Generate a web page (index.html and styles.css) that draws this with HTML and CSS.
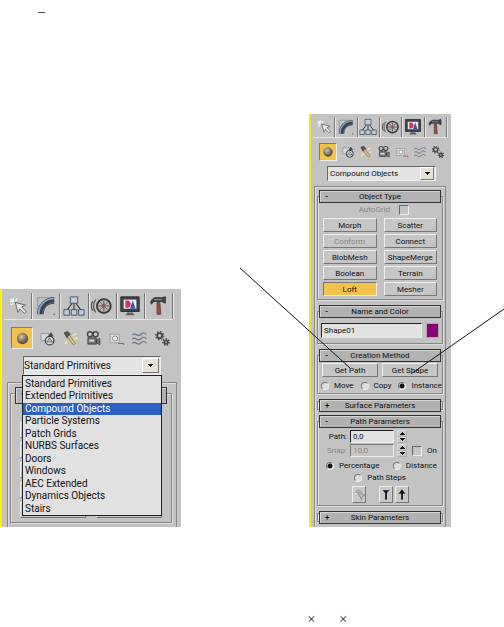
FILE: index.html
```html
<!DOCTYPE html>
<html lang="en">
<head>
<meta charset="utf-8">
<meta name="viewport" content="width=device-width, initial-scale=1">
<title>Compound Objects</title>
<link rel="stylesheet" href="styles.css">
</head>
<body>
<svg class="defs" aria-hidden="true">
  <defs>
    <radialGradient id="ball" cx=".4" cy=".35" r=".65"><stop offset="0" stop-color="#ccc"/><stop offset=".5" stop-color="#777"/><stop offset="1" stop-color="#333"/></radialGradient>
    <symbol id="create" viewBox="0 0 24 24"><path d="M7 3v4M3 7h4M4 4l3 3M11 4l-2 3M4 11l3-2" stroke="#fff" stroke-width="1.4"/><path d="M9 8l3 11 2-4 5 5 2-2-5-5 4-2z" fill="#eee" stroke="#555"/></symbol>
    <symbol id="modify" viewBox="0 0 24 24"><path d="M3 21V3h18" fill="none" stroke="#888"/><path d="M6 21C6 12 12 6 21 6" fill="none" stroke="#2a3442" stroke-width="7"/><path d="M4 21C4 11 11 4 21 4" fill="none" stroke="#7b9ccb" stroke-width="2"/><path d="M8 21C9 13 13 9 21 8" fill="none" stroke="#52688a"/><path d="M20 21h2" stroke="#444"/></symbol>
    <symbol id="hierarchy" viewBox="0 0 24 24"><path d="M12 8v9M10 9l-6 8M14 9l6 8" stroke="#333" stroke-width="1.3"/><g fill="#c3cddd" stroke="#394454"><path d="M8 2h8v7H8zM1 16h6v6H1zM9 16h6v6H9zM17 16h6v6h-6z"/></g></symbol>
    <symbol id="motion" viewBox="0 0 24 24"><circle cx="14" cy="12" r="7.5" fill="#bbb" stroke="#292929" stroke-width="2"/><path d="M14 6v12M8 12h12M10 8l8 8M18 8l-8 8" stroke="#444"/><circle cx="14" cy="12" r="2" fill="#a44"/><path d="M5 5c-3 4-3 10 0 14M2 7c-2 3-2 7 0 10" fill="none" stroke="#444" stroke-width="1.3"/></symbol>
    <symbol id="display" viewBox="0 0 24 24"><path d="M2 2h20v16H2z" fill="#30343d" stroke="#16191e"/><path d="M5 5h14v10H5z" fill="#eef"/><path d="M7 6v8h2c5 0 5-8 0-8z" fill="#d12d45"/><path d="M12 15l3-9 3 9z" fill="#274abd"/><path d="M9 19h6l2 3H7z" fill="#555"/></symbol>
    <symbol id="utility" viewBox="0 0 24 24"><path d="M11 8h3l1 13h-4z" fill="#984237" stroke="#5e302c"/><path d="M4 8c1-4 5-6 9-5h3l4-1v7l-4-2H9c-2 0-3 1-4 3z" fill="#333a41" stroke="#222"/><path d="M8 5h8" stroke="#8d98a4"/></symbol>
    <symbol id="sphere" viewBox="0 0 24 24"><circle cx="12" cy="12" r="8" fill="url(#ball)"/></symbol>
    <symbol id="shapes" viewBox="0 0 24 24"><path d="M3 5h11v10H3z" fill="#ddd" stroke="#777"/><path d="M13 8l4-5 4 6z" fill="#333"/><circle cx="15" cy="15" r="6" fill="#e8e8e8" stroke="#222" stroke-width="1.7"/><path d="M11 17l4-6 4 6z" fill="#bbb" stroke="#333"/></symbol>
    <symbol id="light" viewBox="0 0 24 24"><path d="M3 4l5-2 4 4-5 5z" fill="#444" stroke="#222"/><path d="M8 10l2-3 9 12-3 2z" fill="#e8cc67" stroke="#665b38"/><path d="M15 8l5-3M17 12h5M7 15l-3 5" stroke="#fff2a2" stroke-width="2"/></symbol>
    <symbol id="camera" viewBox="0 0 24 24"><circle cx="7" cy="6" r="3.5" fill="#ccc" stroke="#333" stroke-width="2"/><circle cx="15" cy="6" r="3.5" fill="#ccc" stroke="#333" stroke-width="2"/><path d="M4 11h12v9H4zM16 14l5-2v9l-5-3z" fill="#666" stroke="#222"/><path d="M6 15h7" stroke="#ddd" stroke-width="3"/></symbol>
    <symbol id="helper" viewBox="0 0 24 24"><path d="M3 6h13v12H3z" fill="#ddd" stroke="#888"/><circle cx="10" cy="12" r="3.5" fill="#fff" stroke="#555"/><path d="M14 19h8v2" fill="none" stroke="#a44e4e" stroke-width="1.5"/></symbol>
    <symbol id="waves" viewBox="0 0 24 24"><path d="M2 7c4-5 7 4 11 0s5-3 9-1M2 13c4-5 7 4 11 0s5-3 9-1M2 19c4-5 7 4 11 0s5-3 9-1" fill="none" stroke="#596a83" stroke-width="1.7"/></symbol>
    <symbol id="gears" viewBox="0 0 24 24"><g fill="none" stroke="#333"><circle cx="8" cy="8" r="3.5" stroke-width="2.5"/><circle cx="8" cy="8" r="5.5" stroke-width="2" stroke-dasharray="2 2.3"/><circle cx="17" cy="17" r="2.5" stroke-width="2.5"/><circle cx="17" cy="17" r="4.5" stroke-width="2" stroke-dasharray="2 2"/></g></symbol>
  </defs>
</svg>

<p class="note note-top">–</p>

<main class="figures">
  <section class="panel panel-large" aria-label="Geometry categories">
    <nav class="tabs">
      <button aria-label="Create"><svg><use href="#create"/></svg></button>
      <button aria-label="Modify"><svg><use href="#modify"/></svg></button>
      <button aria-label="Hierarchy"><svg><use href="#hierarchy"/></svg></button>
      <button aria-label="Motion"><svg><use href="#motion"/></svg></button>
      <button aria-label="Display"><svg><use href="#display"/></svg></button>
      <button aria-label="Utilities"><svg><use href="#utility"/></svg></button>
    </nav>
    <div class="tools">
      <button class="active" aria-label="Geometry"><svg><use href="#sphere"/></svg></button>
      <button aria-label="Shapes"><svg><use href="#shapes"/></svg></button>
      <button aria-label="Lights"><svg><use href="#light"/></svg></button>
      <button aria-label="Cameras"><svg><use href="#camera"/></svg></button>
      <button aria-label="Helpers"><svg><use href="#helper"/></svg></button>
      <button aria-label="Space Warps"><svg><use href="#waves"/></svg></button>
      <button aria-label="Systems"><svg><use href="#gears"/></svg></button>
    </div>
    <div class="picker">
      <select aria-label="Category"><option>Standard Primitives</option></select>
      <ul class="menu" role="listbox" aria-label="Categories">
        <li role="option">Standard Primitives</li>
        <li role="option">Extended Primitives</li>
        <li role="option" class="chosen" aria-selected="true">Compound Objects</li>
        <li role="option">Particle Systems</li>
        <li role="option">Patch Grids</li>
        <li role="option">NURBS Surfaces</li>
        <li role="option">Doors</li>
        <li role="option">Windows</li>
        <li role="option">AEC Extended</li>
        <li role="option">Dynamics Objects</li>
        <li role="option">Stairs</li>
      </ul>
    </div>
    <div class="rollouts">
      <section class="rollout">
        <h2><span>-</span></h2>
        <div class="slots"><i></i><i></i><i></i><i></i><i></i><i></i><i></i><i></i><i></i><i></i></div>
      </section>
    </div>
  </section>

  <section class="panel panel-small" aria-label="Loft settings">
    <nav class="tabs">
      <button aria-label="Create"><svg><use href="#create"/></svg></button>
      <button aria-label="Modify"><svg><use href="#modify"/></svg></button>
      <button aria-label="Hierarchy"><svg><use href="#hierarchy"/></svg></button>
      <button aria-label="Motion"><svg><use href="#motion"/></svg></button>
      <button aria-label="Display"><svg><use href="#display"/></svg></button>
      <button aria-label="Utilities"><svg><use href="#utility"/></svg></button>
    </nav>
    <div class="tools">
      <button class="active" aria-label="Geometry"><svg><use href="#sphere"/></svg></button>
      <button aria-label="Shapes"><svg><use href="#shapes"/></svg></button>
      <button aria-label="Lights"><svg><use href="#light"/></svg></button>
      <button aria-label="Cameras"><svg><use href="#camera"/></svg></button>
      <button aria-label="Helpers"><svg><use href="#helper"/></svg></button>
      <button aria-label="Space Warps"><svg><use href="#waves"/></svg></button>
      <button aria-label="Systems"><svg><use href="#gears"/></svg></button>
    </div>
    <div class="picker">
      <select aria-label="Category"><option>Compound Objects</option></select>
    </div>
    <div class="rollouts">
      <section class="rollout">
        <h2><span>-</span>Object Type</h2>
        <label class="autogrid">AutoGrid <input type="checkbox" disabled></label>
        <div class="types">
          <button>Morph</button><button>Scatter</button>
          <button disabled>Conform</button><button>Connect</button>
          <button>BlobMesh</button><button>ShapeMerge</button>
          <button>Boolean</button><button>Terrain</button>
          <button class="active">Loft</button><button>Mesher</button>
        </div>
      </section>
      <section class="rollout">
        <h2><span>-</span>Name and Color</h2>
        <div class="name">
          <input type="text" aria-label="Name" value="Shape01">
          <button class="swatch" aria-label="Color"></button>
        </div>
      </section>
      <section class="rollout">
        <h2><span>-</span>Creation Method</h2>
        <div class="get"><button>Get Path</button><button>Get Shape</button></div>
        <div class="radios">
          <label><input type="radio" name="method">Move</label>
          <label><input type="radio" name="method">Copy</label>
          <label><input type="radio" name="method" checked>Instance</label>
        </div>
      </section>
      <section class="rollout closed"><h2><span>+</span>Surface Parameters</h2></section>
      <section class="rollout">
        <h2><span>-</span>Path Parameters</h2>
        <div class="params">
          <label for="path">Path:</label>
          <input type="text" id="path" value="0,0">
          <div class="spinner"><button aria-label="Increase path"></button><button aria-label="Decrease path"></button></div>
          <span></span>
          <label for="snap" class="dim">Snap:</label>
          <input type="text" id="snap" value="10,0" disabled>
          <div class="spinner"><button aria-label="Increase snap"></button><button aria-label="Decrease snap"></button></div>
          <label class="on"><input type="checkbox">On</label>
        </div>
        <div class="radios units">
          <label><input type="radio" name="unit" checked>Percentage</label>
          <label><input type="radio" name="unit">Distance</label>
        </div>
        <div class="radios steps"><label><input type="radio" name="unit">Path Steps</label></div>
        <div class="shape-buttons">
          <button class="pick" aria-label="Pick shape"><svg viewBox="0 0 14 16"><path d="M3 6c1-4 6-4 7 0M5 5l5 9 1-4 3-1z" fill="#bbb" stroke="#888"/><path d="M2 8l3-2" stroke="#eee"/></svg></button>
          <button aria-label="Previous shape"><svg viewBox="0 0 14 16"><path d="M3 3h8L7 7zM6 6h2v8H6z" fill="#111"/></svg></button>
          <button aria-label="Next shape"><svg viewBox="0 0 14 16"><path d="M7 2l4 5H3zM6 6h2v8H6z" fill="#111"/></svg></button>
        </div>
      </section>
      <section class="rollout closed"><h2><span>+</span>Skin Parameters</h2></section>
    </div>
    <svg class="leaders" viewBox="0 0 264 106" aria-hidden="true"><path d="M0 0l110 100M264 41l-93 65" stroke="#111" fill="none"/></svg>
  </section>
</main>

<p class="note note-bottom"><span>×</span><span>×</span></p>
</body>
</html>
```
FILE: styles.css
```css
* { box-sizing: border-box; }

body {
  margin: 0;
  background: #fff;
  color: #111;
  font-family: Roboto, "Liberation Sans", sans-serif;
}

button, input, select { font: inherit; color: inherit; margin: 0; padding: 0; border-radius: 0; }
.defs { display: block; width: 0; height: 0; }

.note { margin: 0; font: 14px/16px "Liberation Serif", serif; }
.note-top { padding: 4px 0 0 38px; }
.note-bottom { display: flex; gap: 24px; padding: 85px 0 0 61%; }

.figures {
  display: grid;
  grid-template-columns: minmax(0, 181fr) minmax(0, 128fr) minmax(0, 142fr) minmax(0, 53fr);
  align-items: end;
  padding-top: 94px;
}

/* Command panel */
.panel {
  position: relative;
  background: #c3c3c3;
  border-left: 2px solid #fff200;
}
.panel-large { font-size: 10px; line-height: 12px; --icon: 22px; --tool: 17px; --active: 22px; padding-top: 4px; }
.panel-small { grid-column: 3; font-size: 8px; line-height: 11px; --icon: 18px; --tool: 14px; --active: 18px; padding-top: 3px; border-left-color: #ece832; }

.tabs { display: flex; margin-left: 2px; border-bottom: 1px solid #e4e4e4; }
.tabs button {
  flex: 1;
  display: flex;
  justify-content: center;
  align-items: center;
  background: none;
  border: 0;
  border-right: 1px solid #777;
  box-shadow: 1px 0 #e8e8e8;
}
.tabs svg { flex: none; width: var(--icon); height: var(--icon); opacity: .9; }
.panel-large .tabs { margin-right: 8px; }
.panel-large .tabs button { height: 26px; }
.panel-small .tabs { margin-right: 4px; }
.panel-small .tabs button { height: 20px; }

.tools { display: flex; align-items: center; justify-content: space-between; }
.tools button {
  display: flex;
  justify-content: center;
  align-items: center;
  width: var(--tool);
  height: var(--active);
  background: none;
  border: 0;
}
.tools svg { flex: none; width: var(--tool); height: var(--tool); opacity: .85; }
.tools .active { width: var(--active); background: #f3c24d; border: 1px solid #907b48; border-right-color: #eee; border-bottom-color: #eee; }
.panel-large .tools { padding: 7px 10px 0 9px; }
.panel-small .tools { padding: 5px 6px 0 8px; }

.picker { position: relative; }
.picker select {
  display: block;
  width: 100%;
  appearance: none;
  border: 1px solid #666;
  border-right-color: #eee;
  border-bottom-color: #eee;
  background: #e4e4e4;
}
.picker::after {
  content: "";
  position: absolute;
  top: 2px;
  right: 2px;
  bottom: 2px;
  width: 15px;
  border: 1px solid #777;
  border-top-color: #fff;
  border-left-color: #fff;
  background:
    linear-gradient(#111, #111) 50% 40% / 5px 1px no-repeat,
    linear-gradient(#111, #111) 50% 50% / 3px 1px no-repeat,
    linear-gradient(#111, #111) 50% 60% / 1px 1px no-repeat,
    #e6e3d6;
  pointer-events: none;
}
.panel-large .picker { margin: 7px 20px 0 21px; }
.panel-large select { height: 19px; }
.panel-small .picker { margin: 5px 15px 0 16px; }
.panel-small select { height: 15px; padding-left: 2px; }
.panel-small .picker::after { width: 12px; top: 1px; bottom: 1px; }

.menu {
  position: absolute;
  z-index: 2;
  top: 100%;
  left: -1px;
  right: -1px;
  display: grid;
  grid-auto-rows: 1fr;
  height: 141px;
  margin: 0;
  padding: 2px 0 0;
  list-style: none;
  background: #e1e1e1;
  border: 1px solid #222;
}
.menu li { padding-left: 2px; }
.menu .chosen { background: #2c5fc4; color: #fff; }

/* Rollouts */
.rollouts { border: 1px solid #888; box-shadow: inset 1px 1px #ddd; border-bottom: 0; }
.panel-large .rollouts { margin: 7px 4px 0 5px; padding: 4px 4px 4px 2px; }
.panel-small .rollouts { margin: 5px 5px 0 3px; padding: 3px 2px 3px; }
.rollout { position: relative; }
.rollout::before {
  content: "";
  position: absolute;
  inset: 6px 0 0;
  border: 1px solid #888;
  box-shadow: inset 1px 1px #ddd, 1px 1px #ddd;
  pointer-events: none;
}
.rollout > * { position: relative; }
.rollout h2 {
  margin: 0 2px;
  border: 1px solid #333;
  background: #b2b2b2;
  box-shadow: inset 1px 1px #d4d4d4;
  font-size: inherit;
  font-weight: 400;
  text-align: center;
}
.rollout h2 span { position: absolute; left: 5px; font-weight: 700; }
.panel-large .rollout h2 { height: 17px; margin: 0 5px; }
.panel-small .rollout { margin-bottom: 5px; padding-bottom: 3px; }
.panel-small .rollout h2 { height: 13px; }
.panel-small .rollout.closed { margin-bottom: 3px; padding: 0; }
.panel-small .rollout.closed::before { inset: 2px 0; }
.panel-small .rollout:last-child { margin-bottom: 0; }

.slots { display: grid; grid-template-columns: 1fr 1fr; gap: 4px 10px; padding: 18px 10px 5px; }
.slots i { height: 16px; border: 1px solid #777; border-top-color: #eee; border-left-color: #eee; }

.autogrid { display: flex; justify-content: flex-end; align-items: center; gap: 9px; padding: 1px 34px 2px 0; color: #888; }
input[type="checkbox"] {
  appearance: none;
  width: 10px;
  height: 10px;
  border: 1px solid #666;
  border-right-color: #eee;
  border-bottom-color: #eee;
}
.types, .get { display: grid; grid-template-columns: 1fr 1fr; }
.types { gap: 2px 7px; padding: 1px 6px 1px; }
.get { gap: 4px; padding: 1px 5px 0; }
.types button, .get button {
  height: 14px;
  white-space: nowrap;
  background: #c6c6c6;
  border: 1px solid #777;
  border-top-color: #eee;
  border-left-color: #eee;
}
.types button:disabled { color: #888; }
.types .active { background: #f3c24d; border-color: #777 #eee #eee #777; }

.name { display: flex; gap: 4px; padding: 5px 4px 3px; }
input[type="text"] {
  min-width: 0;
  padding: 0 2px;
  background: #e2e2e2;
  border: 1px solid #222;
  border-right-color: #eee;
  border-bottom-color: #eee;
}
.name input { flex: 1; height: 15px; }
.swatch { width: 13px; height: 15px; background: #8a0078; border: 1px solid #aaa; }

.radios { display: flex; justify-content: space-between; padding: 3px 1px 0 4px; }
.radios label { display: flex; align-items: center; gap: 5px; }
input[type="radio"] {
  appearance: none;
  width: 8px;
  height: 8px;
  border: 1px solid #777;
  border-right-color: #eee;
  border-bottom-color: #eee;
  border-radius: 50%;
  background: #ddd;
}
input[type="radio"]:checked { background: radial-gradient(circle, #111 2px, #ddd 3px); }

.params { display: grid; grid-template-columns: 30px 44px 10px 1fr; gap: 1px 3px; align-items: center; padding-top: 2px; }
.params > label { text-align: right; }
.params input[type="text"] { height: 13px; }
.params .dim, .params input:disabled { color: #888; }
.params input:disabled { background: #c6c6c6; border-color: #777 #eee #eee #777; }
.params .on { display: flex; align-items: center; gap: 5px; padding-left: 2px; }
.spinner { display: grid; grid-template-rows: 1fr 1fr; height: 13px; }
.spinner button {
  border: 1px solid #aaa;
  border-top-color: #ddd;
  border-left-color: #ddd;
  background: conic-gradient(from 135deg at 50% 0, #111 90deg, transparent 0) center / 5px 3px no-repeat #c8c8c8;
}
.spinner button:last-child { background-image: conic-gradient(from -45deg at 50% 100%, #111 90deg, transparent 0); }
.units { padding: 3px 6px 0 9px; }
.steps { justify-content: center; padding: 1px 0 0; }
.shape-buttons { display: flex; justify-content: center; gap: 2px; padding: 3px 0 0; }
.shape-buttons button { width: 14px; height: 17px; border: 1px solid #777; border-top-color: #eee; border-left-color: #eee; background: #c8c8c8; }
.shape-buttons .pick { margin-right: 11px; }
.shape-buttons svg { display: block; width: 100%; height: 100%; }

/* Callout lines run from the two Get buttons out to the page */
.leaders { position: absolute; z-index: 3; top: 154px; left: -71px; width: 264px; height: 106px; pointer-events: none; }
```
